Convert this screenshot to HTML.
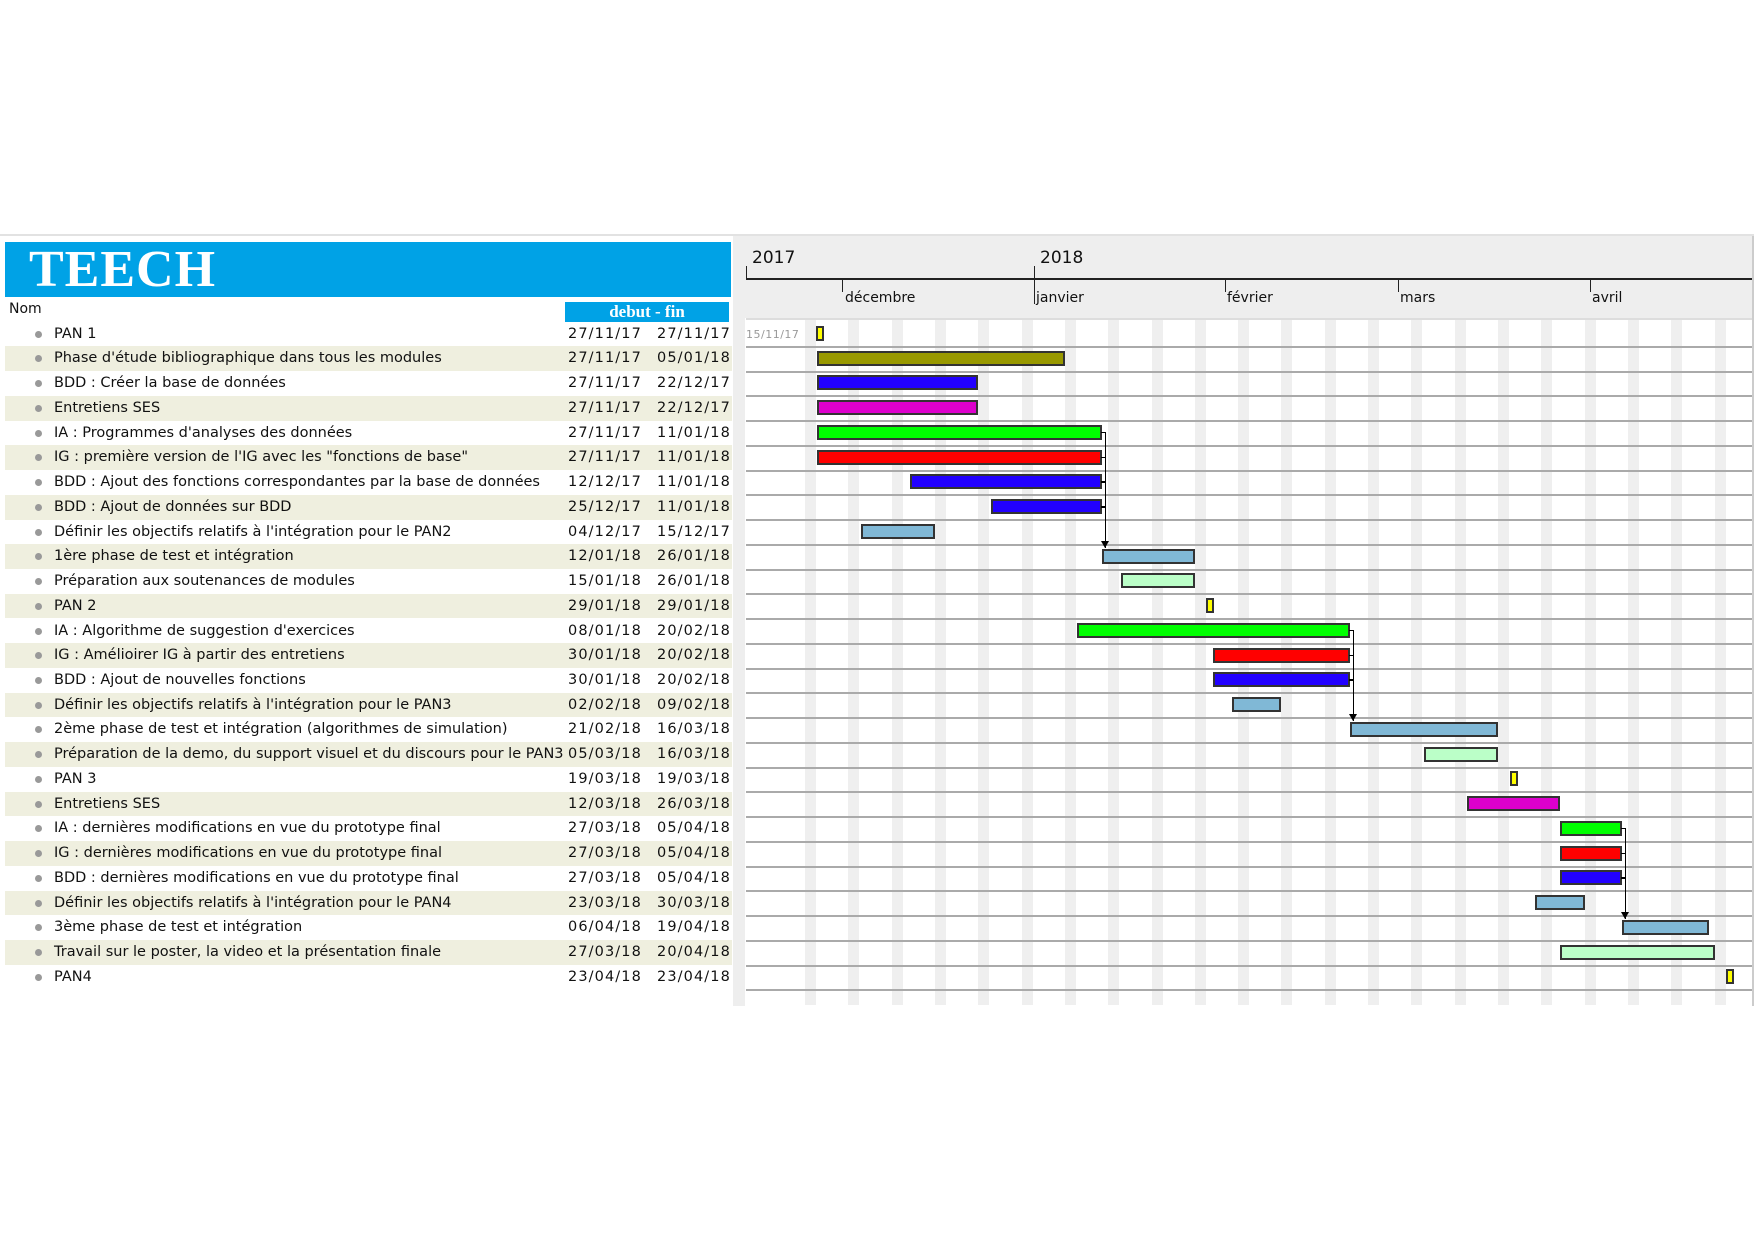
<!DOCTYPE html>
<html><head><meta charset="utf-8"><style>
*{margin:0;padding:0;box-sizing:border-box}
body{width:1754px;height:1240px;background:#fff;position:relative;overflow:hidden;font-family:"DejaVu Sans","Liberation Sans",sans-serif}
.abs{position:absolute}
#top{left:0;top:234px;width:1754px;height:2px;background:#e2e2e2}
#hdr{left:5px;top:242px;width:726px;height:55px;background:#00a2e6}
#hdr span{position:absolute;left:24px;top:-2px;font-family:"Liberation Serif",serif;font-weight:bold;font-size:52px;color:#fff;letter-spacing:1px}
#nom{left:9px;top:301px;font-size:14px;color:#111}
#df{left:565px;top:302px;width:164px;height:20px;background:#00a2e6;color:#fff;font-family:"Liberation Serif",serif;font-weight:bold;font-size:17px;text-align:center;line-height:20px}
.row{position:absolute;left:5px;width:727px;height:24.74px;font-size:14.5px;color:#111;line-height:24.74px;white-space:nowrap}
.row.b{background:#efefdf}
.row i{position:absolute;left:30px;top:9px;width:7px;height:7px;border-radius:50%;background:#999}
.row .n{position:absolute;left:49px}
.row .d1{position:absolute;left:563px;letter-spacing:1.1px}
.row .d2{position:absolute;left:652px;letter-spacing:1.1px}
#gh{left:745px;top:236px;width:1009px;height:82px;background:#eeeeee}
.yl{font-size:17px;color:#111;top:248px}
.ml{font-size:14px;color:#111;top:290px}
.tk{width:1px;background:#222}
.bar{position:absolute;height:15px;border:2px solid #333}
.ms{position:absolute;width:8px;height:15px;border:2px solid #333;background:#ffff00}
</style></head><body>
<div id="top" class="abs"></div>
<div id="hdr" class="abs"><span>TEECH</span></div>
<div id="nom" class="abs">Nom</div>
<div id="df" class="abs">debut - fin</div>
<div class="abs" style="left:733px;top:236px;width:12px;height:770px;background:#eeeeee"></div>

<div id="rows">
<div class="row" style="top:321.6px"><i></i><span class="n">PAN 1</span><span class="d1">27/11/17</span><span class="d2">27/11/17</span></div>
<div class="row b" style="top:346.3px"><i></i><span class="n">Phase d'étude bibliographique dans tous les modules</span><span class="d1">27/11/17</span><span class="d2">05/01/18</span></div>
<div class="row" style="top:371.1px"><i></i><span class="n">BDD : Créer la base de données</span><span class="d1">27/11/17</span><span class="d2">22/12/17</span></div>
<div class="row b" style="top:395.8px"><i></i><span class="n">Entretiens SES</span><span class="d1">27/11/17</span><span class="d2">22/12/17</span></div>
<div class="row" style="top:420.6px"><i></i><span class="n">IA : Programmes d'analyses des données</span><span class="d1">27/11/17</span><span class="d2">11/01/18</span></div>
<div class="row b" style="top:445.3px"><i></i><span class="n">IG : première version de l'IG avec les "fonctions de base"</span><span class="d1">27/11/17</span><span class="d2">11/01/18</span></div>
<div class="row" style="top:470.0px"><i></i><span class="n">BDD : Ajout des fonctions correspondantes par la base de données</span><span class="d1">12/12/17</span><span class="d2">11/01/18</span></div>
<div class="row b" style="top:494.8px"><i></i><span class="n">BDD : Ajout de données sur BDD</span><span class="d1">25/12/17</span><span class="d2">11/01/18</span></div>
<div class="row" style="top:519.5px"><i></i><span class="n">Définir les objectifs relatifs à l'intégration pour le PAN2</span><span class="d1">04/12/17</span><span class="d2">15/12/17</span></div>
<div class="row b" style="top:544.3px"><i></i><span class="n">1ère phase de test et intégration</span><span class="d1">12/01/18</span><span class="d2">26/01/18</span></div>
<div class="row" style="top:569.0px"><i></i><span class="n">Préparation aux soutenances de modules</span><span class="d1">15/01/18</span><span class="d2">26/01/18</span></div>
<div class="row b" style="top:593.7px"><i></i><span class="n">PAN 2</span><span class="d1">29/01/18</span><span class="d2">29/01/18</span></div>
<div class="row" style="top:618.5px"><i></i><span class="n">IA : Algorithme de suggestion d'exercices</span><span class="d1">08/01/18</span><span class="d2">20/02/18</span></div>
<div class="row b" style="top:643.2px"><i></i><span class="n">IG : Amélioirer IG à partir des entretiens</span><span class="d1">30/01/18</span><span class="d2">20/02/18</span></div>
<div class="row" style="top:668.0px"><i></i><span class="n">BDD : Ajout de nouvelles fonctions</span><span class="d1">30/01/18</span><span class="d2">20/02/18</span></div>
<div class="row b" style="top:692.7px"><i></i><span class="n">Définir les objectifs relatifs à l'intégration pour le PAN3</span><span class="d1">02/02/18</span><span class="d2">09/02/18</span></div>
<div class="row" style="top:717.4px"><i></i><span class="n">2ème phase de test et intégration (algorithmes de simulation)</span><span class="d1">21/02/18</span><span class="d2">16/03/18</span></div>
<div class="row b" style="top:742.2px"><i></i><span class="n">Préparation de la demo, du support visuel et du discours pour le PAN3</span><span class="d1">05/03/18</span><span class="d2">16/03/18</span></div>
<div class="row" style="top:766.9px"><i></i><span class="n">PAN 3</span><span class="d1">19/03/18</span><span class="d2">19/03/18</span></div>
<div class="row b" style="top:791.7px"><i></i><span class="n">Entretiens SES</span><span class="d1">12/03/18</span><span class="d2">26/03/18</span></div>
<div class="row" style="top:816.4px"><i></i><span class="n">IA : dernières modifications en vue du prototype final</span><span class="d1">27/03/18</span><span class="d2">05/04/18</span></div>
<div class="row b" style="top:841.1px"><i></i><span class="n">IG : dernières modifications en vue du prototype final</span><span class="d1">27/03/18</span><span class="d2">05/04/18</span></div>
<div class="row" style="top:865.9px"><i></i><span class="n">BDD : dernières modifications en vue du prototype final</span><span class="d1">27/03/18</span><span class="d2">05/04/18</span></div>
<div class="row b" style="top:890.6px"><i></i><span class="n">Définir les objectifs relatifs à l'intégration pour le PAN4</span><span class="d1">23/03/18</span><span class="d2">30/03/18</span></div>
<div class="row" style="top:915.4px"><i></i><span class="n">3ème phase de test et intégration</span><span class="d1">06/04/18</span><span class="d2">19/04/18</span></div>
<div class="row b" style="top:940.1px"><i></i><span class="n">Travail sur le poster, la video et la présentation finale</span><span class="d1">27/03/18</span><span class="d2">20/04/18</span></div>
<div class="row" style="top:964.8px"><i></i><span class="n">PAN4</span><span class="d1">23/04/18</span><span class="d2">23/04/18</span></div>
</div>

<div id="gh" class="abs"></div>
<div class="abs yl" style="left:752px">2017</div>
<div class="abs yl" style="left:1040px">2018</div>
<div class="abs" style="left:746px;top:278px;width:1006px;height:2px;background:#222"></div>
<div class="abs tk" style="left:746px;top:266px;height:13px"></div>
<div class="abs tk" style="left:1034px;top:266px;height:38px"></div>
<div class="abs tk" style="left:842px;top:280px;height:12px"></div>
<div class="abs tk" style="left:1225px;top:280px;height:12px"></div>
<div class="abs tk" style="left:1398px;top:280px;height:12px"></div>
<div class="abs tk" style="left:1590px;top:280px;height:12px"></div>
<div class="abs ml" style="left:845px">décembre</div>
<div class="abs ml" style="left:1036px">janvier</div>
<div class="abs ml" style="left:1227px">février</div>
<div class="abs ml" style="left:1400px">mars</div>
<div class="abs ml" style="left:1592px">avril</div>
<div class="abs" style="left:746px;top:318px;width:1006px;height:2px;background:#ddd"></div>
<div class="abs" style="left:746px;top:328px;font-size:11px;color:#999;letter-spacing:0.5px">15/11/17</div>
<div class="abs" style="left:1752px;top:236px;width:2px;height:770px;background:#ccc"></div>
<div id="g"></div>
<script>
var g=document.getElementById('g'),h='';
function X(d){return 842+d*6.19;}
for(var d=-6;d<160;d+=7){var x=X(d);if(x<746)continue;if(x>1750)break;h+='<div class="abs" style="left:'+x+'px;top:320px;width:'+Math.min(11,1751-x)+'px;height:685px;background:#efefef"></div>';}
for(var i=0;i<27;i++){var y=334+i*24.74+12;h+='<div class="abs" style="left:746px;top:'+y+'px;width:1006px;height:2px;background:#aaa"></div>';}
function D(m,dd){var b={11:-30,12:0,1:31,2:62,3:90,4:121}[m];return b+dd-1;}
var bars=[[11,27,11,27,'m'],[11,27,1,5,'#999900'],[11,27,12,22,'#2200ff'],[11,27,12,22,'#dd00cc'],[11,27,1,11,'#00ff00'],[11,27,1,11,'#ff0000'],[12,12,1,11,'#2200ff'],[12,25,1,11,'#2200ff'],[12,4,12,15,'#80b8d6'],[1,12,1,26,'#80b8d6'],[1,15,1,26,'#bbffc8'],[1,29,1,29,'m'],[1,8,2,20,'#00ff00'],[1,30,2,20,'#ff0000'],[1,30,2,20,'#2200ff'],[2,2,2,9,'#80b8d6'],[2,21,3,16,'#80b8d6'],[3,5,3,16,'#bbffc8'],[3,19,3,19,'m'],[3,12,3,26,'#dd00cc'],[3,27,4,5,'#00ff00'],[3,27,4,5,'#ff0000'],[3,27,4,5,'#2200ff'],[3,23,3,30,'#80b8d6'],[4,6,4,19,'#80b8d6'],[3,27,4,20,'#bbffc8'],[4,23,4,23,'m']];
for(var i=0;i<bars.length;i++){var b=bars[i],y=334+i*24.74-8;var x1=X(D(b[0],b[1]));
 if(b[4]=='m'){h+='<div class="ms" style="left:'+(x1-1)+'px;top:'+y+'px"></div>';}
 else{var x2=X(D(b[2],b[3])+1);h+='<div class="bar" style="left:'+x1+'px;top:'+y+'px;width:'+(x2-x1)+'px;background:'+b[4]+'"></div>';}}
function dep(x,r1s,r2){var yTop=334+r1s[0]*24.74,yB=334+r2*24.74-9;
 r1s.forEach(function(r){h+='<div class="abs" style="left:'+(x-4)+'px;top:'+(334+r*24.74-1)+'px;width:5px;height:1.5px;background:#000"></div>';});
 h+='<div class="abs" style="left:'+x+'px;top:'+yTop+'px;width:1.5px;height:'+(yB-yTop)+'px;background:#000"></div>';
 h+='<div class="abs" style="left:'+(x-3.5)+'px;top:'+(yB-7)+'px;width:0;height:0;border-left:4px solid transparent;border-right:4px solid transparent;border-top:7px solid #000"></div>';}
dep(X(D(1,11)+1)+3,[4,5,6,7],9);
dep(X(D(2,20)+1)+3,[12,13,14],16);
dep(X(D(4,5)+1)+3,[20,21,22],24);
g.innerHTML=h;
</script>
</body></html>
